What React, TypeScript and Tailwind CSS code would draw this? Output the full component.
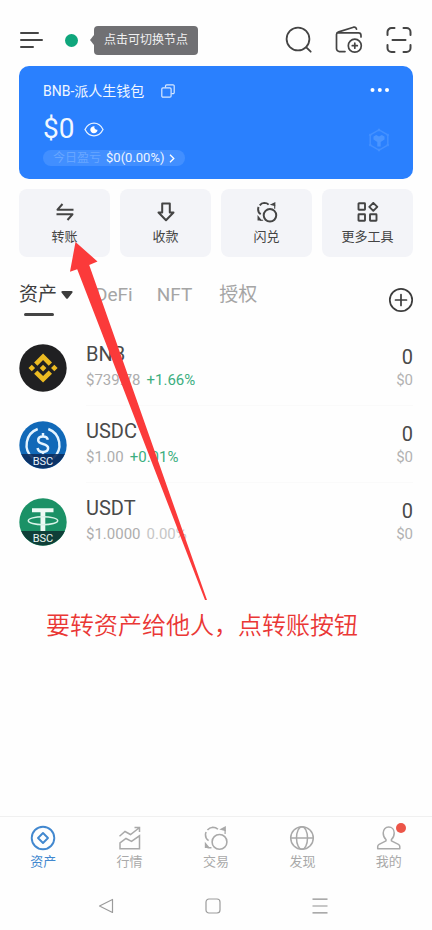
import React from "react";
import clsx from "clsx";

interface IconProps {
  className?: string;
}

const MenuIcon = () => (
  <svg width="24" height="18" viewBox="0 0 24 18" fill="none" stroke="#444" strokeWidth="2" strokeLinecap="round">
    <path d="M2 2h17M2 9h21M2 16h12" />
  </svg>
);

const SearchIcon = () => (
  <svg width="28" height="28" viewBox="0 0 28 28" fill="none" stroke="#444" strokeWidth="1.8" strokeLinecap="round">
    <circle cx="13" cy="13" r="11.4" />
    <path d="M21.3 21.3l4.4 4.4" />
  </svg>
);

const WalletIcon = () => (
  <svg width="28" height="28" viewBox="0 0 28 28" fill="none" stroke="#444" strokeWidth="1.7" strokeLinecap="round" strokeLinejoin="round">
    <path d="M10 25.6H4.5a3 3 0 0 1-3-3V8.5c0-1.4 1-2.2 2.2-2.6L18.5 1.2c1.7-.4 2.7.4 3 2M2.5 6.8H23.5c1.7 0 2.5 1 2.5 2.6V11" />
    <circle cx="19.8" cy="19.7" r="6.5" />
    <path d="M19.8 17.2v5M17.3 19.7h5" />
  </svg>
);

const ScanIcon = () => (
  <svg width="28" height="28" viewBox="0 0 28 28" fill="none" stroke="#444" strokeWidth="2" strokeLinecap="round">
    <path d="M2.5 9V6a4 4 0 0 1 4-4h3M18.5 2h3a4 4 0 0 1 4 4v3M25.5 19v3a4 4 0 0 1-4 4h-3M9.5 26h-3a4 4 0 0 1-4-4v-3M7.5 14h13" />
  </svg>
);

const CopyIcon = () => (
  <svg width="14" height="14" viewBox="0 0 14 14" fill="none" stroke="#d8e8ff" strokeWidth="1.2" strokeLinejoin="round">
    <path d="M4.5 3.5V2A1.2 1.2 0 0 1 5.7.8h6.2A1.2 1.2 0 0 1 13.2 2v6.5a1.2 1.2 0 0 1-1.2 1.2h-1.5" />
    <rect x="0.8" y="3.8" width="9.3" height="9.3" rx="1.2" />
  </svg>
);

const EyeIcon = () => (
  <svg width="20" height="15" viewBox="0 0 20 15" fill="none">
    <path d="M1 7.5C3 3.5 6.2 1.2 10 1.2s7 2.3 9 6.3c-2 4-5.2 6.3-9 6.3S3 11.500 1 7.500z" stroke="#e6f1ff" strokeWidth="1.3" />
    <path d="M10.5 4.2a2.6 2.6 0 0 0 3 3.5 3.6 3.6 0 1 1-3-3.5z" fill="#fff" />
  </svg>
);

const ChainIcon = () => (
  <svg width="22" height="24" viewBox="0 0 22 24" fill="none" stroke="#4390ff" strokeWidth="1.5" strokeLinejoin="round">
    <path d="M11 1.8l8.8 5.1v10.2L11 22.2l-8.8-5.1V6.9z" />
    <path d="M5.5 8.5L8.200 7 11 8.5 13.8 7l2.7 1.5v3L12.7 14v4.5H9.3V14l-3.800-2.5z" fill="#4a95ff" stroke="none" />
    <path d="M11 .8v2.4M1.3 6.4l2 1.2M20.7 6.4l-2 1.2M1.3 17.6l2-1.2M20.7 17.6l-2-1.2M11 23.2v-2.4" strokeWidth="2.2" />
  </svg>
);

const TransferIcon = () => (
  <svg width="20" height="20" viewBox="0 0 20 20" fill="none" stroke="#444" strokeWidth="2" strokeLinejoin="round">
    <path d="M18.5 7.7h-16L7.5 2M1.5 12.3h16L12.5 18" />
  </svg>
);

const ReceiveIcon = () => (
  <svg width="20" height="20" viewBox="0 0 20 20" fill="none" stroke="#444" strokeWidth="2" strokeLinejoin="round">
    <path d="M6.2 1.5h7.6v9h3.7L10 18.3l-7.5-7.800h3.7z" />
  </svg>
);

const SwapIcon = ({ className }: IconProps) => (
  <svg className={className} viewBox="0 0 20 20" fill="none" stroke="currentColor">
    <circle cx="12.7" cy="13" r="5.7" />
    <path d="M4.300 12C2.600 11 1.900 9.400 1.900 7.500c0-.8.200-1.500.5-2.100M3.400 3.900A6 6 0 0 1 7.500 1.700c1.600 0 3 .6 4 1.600" />
    <path d="M12.5 3.4L17.600.8v4zM1.400 12.800l4 4.900h-4z" fill="currentColor" stroke="none" />
    <path d="M17 4v3M3.5 17.500h3" strokeWidth="1" />
  </svg>
);

const ToolsIcon = () => (
  <svg width="22" height="20" viewBox="0 0 22 20" fill="none" stroke="#444" strokeWidth="1.9" strokeLinejoin="round">
    <rect x="1.5" y="1.3" width="6.5" height="6.5" rx="0.5" />
    <rect x="1.5" y="12.2" width="6.5" height="6.5" rx="0.5" />
    <rect x="13" y="12.2" width="6.5" height="6.5" rx="0.5" />
    <path d="M16.3 0.8l4 4-4 4-4-4z" />
  </svg>
);

const AddIcon = () => (
  <svg width="26" height="26" viewBox="0 0 26 26" fill="none" stroke="#3c3c3c" strokeWidth="1.7" strokeLinecap="round">
    <circle cx="13" cy="13" r="11.2" />
    <path d="M13 7.5v11M7.5 13h11" />
  </svg>
);

const BnbLogo = () => (
  <svg className="size-12 shrink-0" viewBox="0 0 48 48">
    <circle cx="24" cy="24" r="23.7" fill="#202022" />
    <path
      transform="translate(9.5 9.5) scale(0.23)"
      fill="#ecbb22"
      d="M38.73 53.2l24.59-24.58 24.6 24.6 14.3-14.31L63.32 0l-38.9 38.9zM0 63.31L14.3 49l14.31 14.31L14.3 77.61zM38.73 73.41l24.59 24.59 24.6-24.6 14.31 14.29-38.9 38.91-38.91-38.88zM97.99 63.31l14.3-14.31 14.32 14.31-14.31 14.3zM77.83 63.3L63.32 48.78 52.59 59.51l-1.24 1.23-2.54 2.54 14.51 14.5 14.51-14.47z"
    />
  </svg>
);

const UsdcLogo = () => (
  <svg className="size-12 shrink-0" viewBox="0 0 48 48" fill="none">
    <circle cx="24" cy="24" r="23.7" fill="#1169b8" />
    <path d="M18.7 8a17 17 0 0 0-5 29M29.3 8a17 17 0 0 1 5 29" stroke="#e4f4ff" strokeWidth="2.4" />
    <path
      d="M28.8 18.8c-.4-2.2-2.2-3.3-4.8-3.3-2.9 0-4.8 1.4-4.8 3.7 0 5 9.900 2.5 9.900 7.9 0 2.4-2 3.9-5.1 3.9-3.2 0-5.1-1.4-5.4-4M24 12v3.5M24 31v3.5"
      stroke="#e4f4ff"
      strokeWidth="2.5"
    />
    <path d="M2.2 33h43.6a23.7 23.7 0 0 1-43.6 0z" fill="#0c2d5e" fillOpacity="0.9" />
    <text x="24" y="43.5" textAnchor="middle" fontSize="11" fill="#e8f2fa">BSC</text>
  </svg>
);

const UsdtLogo = () => (
  <svg className="size-12 shrink-0" viewBox="0 0 48 48" fill="none">
    <circle cx="24" cy="24" r="23.7" fill="#1b9166" />
    <path d="M13 10.3h21.5v4h-8.200V34h-4.8V14.3H13z" fill="#eefaf5" />
    <ellipse cx="24" cy="22.7" rx="14.7" ry="4" stroke="#d9f3e8" strokeWidth="1.5" />
    <path d="M2.2 33h43.6a23.7 23.7 0 0 1-43.6 0z" fill="#0f3f38" />
    <text x="24" y="43.5" textAnchor="middle" fontSize="11" fill="#e8f5f0">BSC</text>
  </svg>
);

const WalletTabIcon = () => (
  <svg className="size-[26px]" viewBox="0 0 26 26" fill="none" stroke="currentColor" strokeWidth="1.9" strokeLinejoin="round">
    <circle cx="13" cy="13" r="11.3" />
    <path d="M13 8l5 5-5 5-5-5z" />
  </svg>
);

const MarketIcon = () => (
  <svg className="size-[26px]" viewBox="0 0 26 26" fill="none" stroke="currentColor" strokeWidth="1.5">
    <path d="M2.5 11.2L8 6.5l5.5 3L22 3M17.5 2.5h5V7" />
    <path d="M3 23.8v-6l6-4.3 5.5 2.8 8-5.5v13z" />
  </svg>
);

const DiscoverIcon = () => (
  <svg className="size-[26px]" viewBox="0 0 26 26" fill="none" stroke="currentColor" strokeWidth="1.5">
    <circle cx="13" cy="13" r="11.3" />
    <ellipse cx="13" cy="13" rx="5.5" ry="11.3" />
    <path d="M1.7 13h22.6" />
  </svg>
);

const MeIcon = () => (
  <svg className="size-[26px]" viewBox="0 0 26 26" fill="none" stroke="currentColor" strokeWidth="1.5" strokeLinejoin="round">
    <path d="M10 14.5C8 12.8 7.2 10.5 7.2 8c0-3.6 2.3-6 5.5-6s5.5 2.4 5.5 6c0 2.5-.8 4.8-2.8 6.5v1.3l7 3.5c1 .5 1.4 1.2 1.4 2.2v2.2H1.7v-2.2c0-1 .4-1.700 1.400-2.200l6.900-3.500z" />
  </svg>
);

const actions = [
  { label: "转账", icon: <TransferIcon /> },
  { label: "收款", icon: <ReceiveIcon /> },
  { label: "闪兑", icon: <SwapIcon className="size-[22px] stroke-[1.8]" /> },
  { label: "更多工具", icon: <ToolsIcon /> },
];

const tokens = [
  { name: "BNB", price: "$739.78", change: "+1.66%", up: true, logo: <BnbLogo /> },
  { name: "USDC", price: "$1.00", change: "+0.01%", up: true, logo: <UsdcLogo /> },
  { name: "USDT", price: "$1.0000", change: "0.00%", up: false, logo: <UsdtLogo /> },
];

const navItems = [
  { label: "资产", icon: <WalletTabIcon />, active: true },
  { label: "行情", icon: <MarketIcon /> },
  { label: "交易", icon: <SwapIcon className="size-[26px] stroke-[1.2]" /> },
  { label: "发现", icon: <DiscoverIcon /> },
  { label: "我的", icon: <MeIcon />, badge: true },
];

const Header = () => (
  <header className="flex items-center h-[66px] pt-3.5 px-[19px]">
    <button aria-label="menu">
      <MenuIcon />
    </button>
    <span className="ml-[22px] size-[13px] rounded-full bg-[#0fa67c]" />
    <div className="ml-3 flex items-center">
      <svg width="4" height="10" viewBox="0 0 4 10">
        <path d="M4 0v10L0 5z" fill="#707073" />
      </svg>
      <div className="h-[29px] px-2.5 flex items-center justify-center rounded bg-[#707073] text-xs text-[#f1f1f1]">
        点击可切换节点
      </div>
    </div>
    <div className="ml-auto flex items-center gap-[22px]">
      <button aria-label="search">
        <SearchIcon />
      </button>
      <button aria-label="add wallet">
        <WalletIcon />
      </button>
      <button aria-label="scan">
        <ScanIcon />
      </button>
    </div>
  </header>
);

const BalanceCard = () => (
  <section className="mx-[19px] h-[113px] pl-6 pr-[23px] pt-[15px] flex justify-between rounded-[10px] bg-[#2a80fe] text-white">
    <div>
      <div className="flex items-center h-5 text-sm text-[#f1f7ff]">
        BNB-派人生钱包
        <button aria-label="copy address" className="ml-[17px]">
          <CopyIcon />
        </button>
      </div>
      <div className="mt-2 flex items-center h-10 text-[28px] text-[#f1f7ff]">
        $0
        <button aria-label="hide balance" className="ml-2.5">
          <EyeIcon />
        </button>
      </div>
      <button className="mt-px flex items-center h-4 px-2.5 rounded-full bg-[#428fff] text-[13px] text-[#eef5ff]">
        <span className="text-xs text-[#68a6ff]">今日盈亏</span>
        <span className="ml-[5px]">$0(0.00%)</span>
        <svg className="ml-[5px]" width="6" height="9" viewBox="0 0 6 9" fill="none" stroke="#fff" strokeWidth="1.3">
          <path d="M1 .8l3.8 3.7L1 8.2" />
        </svg>
      </button>
    </div>
    <div className="flex flex-col items-end">
      <button aria-label="more" className="h-[18px]">
        <svg width="20" height="6" viewBox="0 0 20 6" fill="#fff">
          <circle cx="2.5" cy="3" r="2" />
          <circle cx="9.8" cy="3" r="2" />
          <circle cx="17" cy="3" r="2" />
        </svg>
      </button>
      <div className="mt-[29px]">
        <ChainIcon />
      </div>
    </div>
  </section>
);

const Actions = () => (
  <div className="mt-2.5 mx-[19px] grid grid-cols-4 gap-2.5">
    {actions.map((item) => (
      <button
        key={item.label}
        className="h-[68px] pt-0.5 flex flex-col items-center justify-center gap-1 rounded-lg bg-[#f3f4f8] text-[13px] leading-5 text-[#444]"
      >
        <span className="flex h-[22px] items-center">{item.icon}</span>
        {item.label}
      </button>
    ))}
  </div>
);

const Tabs = () => (
  <div className="flex justify-between h-[72px] pl-[19px] pr-[18px] text-[19px] leading-7 text-[#a5a5a5]">
    <div className="flex items-start pt-6">
      <button className="flex flex-col text-[#3f3f3f]">
        <span className="flex items-center">
          资产
          <svg className="ml-1" width="12" height="8" viewBox="0 0 12 8" fill="#3c3c3c">
            <path d="M1.5 0h9c1 0 1.5 1 .8 1.8L7 7.3c-.5.7-1.5.7-2 0L.7 1.8C0 1 .5 0 1.5 0z" />
          </svg>
        </span>
        <span className="mt-1 ml-[5px] h-[3px] w-[30px] rounded-full bg-[#444]" />
      </button>
      <button className="ml-[22px]">DeFi</button>
      <button className="ml-6">NFT</button>
      <button className="ml-[27px]">授权</button>
    </div>
    <button aria-label="add token" className="mt-[30px] self-start">
      <AddIcon />
    </button>
  </div>
);

const TokenList = () => (
  <ul className="px-[19px]">
    {tokens.map((token, idx) => (
      <li key={token.name} className="flex items-center h-[77px]">
        {token.logo}
        <div
          className={clsx(
            "ml-[19px] flex-1 h-full flex justify-between",
            idx < tokens.length - 1 && "border-b border-[#fafafa]"
          )}
        >
          <div className="pt-3">
            <div className="text-xl leading-[26px] text-[#4a4a4a]">{token.name}</div>
            <div className="flex gap-1.5 text-[15px] leading-[26px] text-[#adadad]">
              <span>{token.price}</span>
              <span className={token.up ? "text-[#3cae80]" : "text-[#c6c6c6]"}>{token.change}</span>
            </div>
          </div>
          <div className="pt-4 text-right">
            <div className="text-xl leading-6 text-[#4a4a4a]">0</div>
            <div className="text-[15px] leading-[22px] text-[#b2b2b2]">$0</div>
          </div>
        </div>
      </li>
    ))}
  </ul>
);

const BottomNav = () => (
  <nav className="mt-auto border-t border-[#f0f0f0]">
    <div className="grid grid-cols-5 h-[68px]">
      {navItems.map((item) => (
        <button
          key={item.label}
          className={clsx(
            "pt-2 flex flex-col items-center text-[13px] leading-5",
            item.active ? "text-[#4288cf]" : "text-[#a9a9a9]"
          )}
        >
          <span className="relative mb-px">
            {item.icon}
            {item.badge && <span className="absolute -top-0.5 -right-1 size-2.5 rounded-full bg-[#ec5548]" />}
          </span>
          {item.label}
        </button>
      ))}
    </div>
    <div className="flex items-center justify-center gap-[91px] h-[45px] pb-1 pr-[7px]">
      <button aria-label="back">
        <svg width="16" height="16" viewBox="0 0 16 16" fill="none" stroke="#9b9b9b" strokeWidth="1.2" strokeLinejoin="round">
          <path d="M14.5 1.5v13L1.5 8z" />
        </svg>
      </button>
      <button aria-label="home">
        <svg width="16" height="16" viewBox="0 0 16 16" fill="none" stroke="#9b9b9b" strokeWidth="1.2">
          <rect x="1" y="1" width="14" height="14" rx="3" />
        </svg>
      </button>
      <button aria-label="recents">
        <svg width="16" height="16" viewBox="0 0 16 16" fill="none" stroke="#8f8f8f" strokeWidth="1.2">
          <path d="M.5 1.2h15M.5 8h15M.5 14.8h15" />
        </svg>
      </button>
    </div>
  </nav>
);

const App = () => {
  return (
    <div className="relative flex flex-col min-h-screen bg-[#fefefe] font-[Roboto,'Noto_Sans_CJK_SC',sans-serif]" lang="zh-CN">
      <Header />
      <BalanceCard />
      <Actions />
      <Tabs />
      <TokenList />
      <p className="mt-12 mb-10 pl-[46px] text-2xl leading-9 font-[350] text-[#ea3735]">要转资产给他人，点转账按钮</p>
      <BottomNav />
      {/* pointer from the hint up to the transfer button */}
      <svg
        className="absolute left-[70px] top-[242px] pointer-events-none"
        width="138"
        height="359"
        viewBox="0 0 138 359"
        fill="#fb3a3a"
      >
        <path d="M5.5 0l22 19.500-8.300 3.500L137 358h-2L7.200 27.200 0 29.800z" />
      </svg>
    </div>
  );
};

export default App;
